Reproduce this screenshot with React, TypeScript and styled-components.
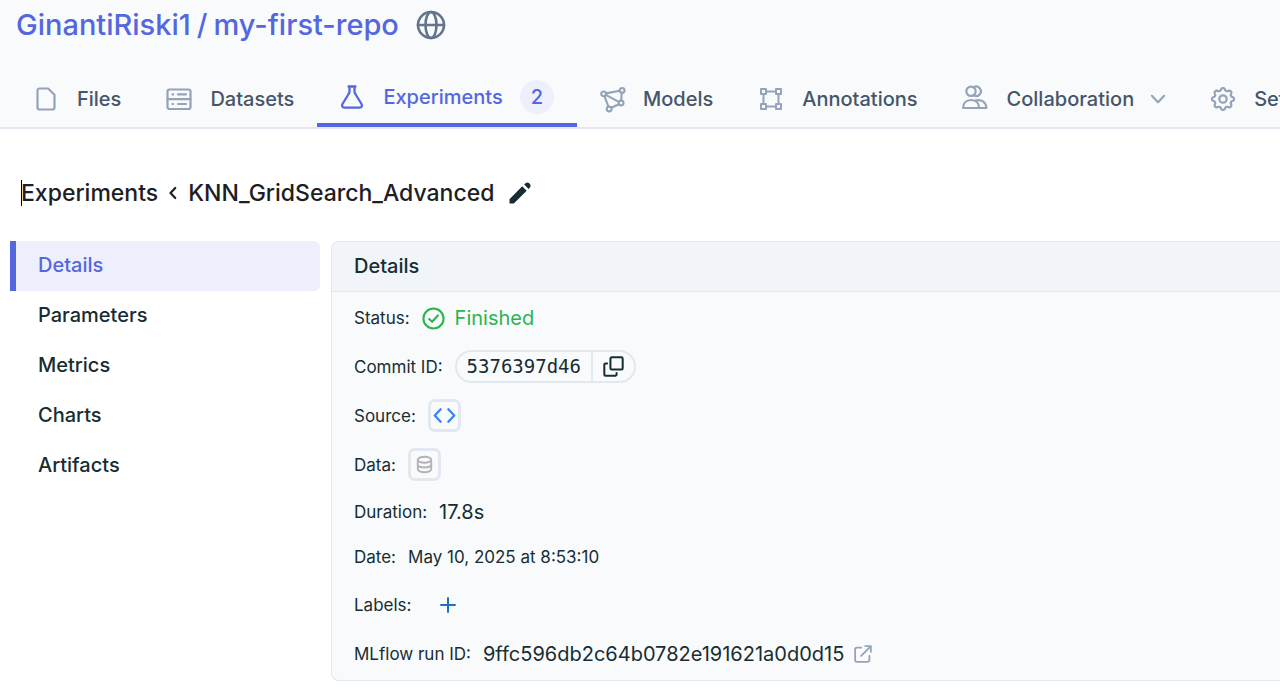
import React from "react";
import styled, { createGlobalStyle } from "styled-components";

const Global = createGlobalStyle`
  *, *::before, *::after { box-sizing: border-box; }
  body {
    margin: 0;
    background: #ffffff;
    color: #172d32;
    font-family: Inter, "Liberation Sans", sans-serif;
    overflow-x: hidden;
  }
  a { color: inherit; text-decoration: none; }
  button { font: inherit; color: inherit; background: none; border: 0; padding: 0; cursor: pointer; }
  svg { display: block; flex: none; overflow: visible; }
`;

const Header = styled.header`
  background: #f8fafc;
  border-bottom: 2px solid #e2e8f0;
`;

const RepoTitle = styled.h1`
  display: flex;
  align-items: center;
  gap: 6px;
  margin: 0;
  padding: 5px 16px 0;
  font-size: 29px;
  line-height: 40px;
  font-weight: 500;
  color: #5467de;

  svg { margin-left: 11px; color: #64748b; }
`;

const Tabs = styled.nav`
  display: flex;
  height: 56px;
  margin-top: 26px;
  padding-left: 11px;
  overflow: hidden;
`;

const Tab = styled.a<{ $active?: boolean }>`
  display: flex;
  flex: none;
  align-items: center;
  gap: 19px;
  padding: 0 23px;
  font-size: 20px;
  line-height: 24px;
  font-weight: 500;
  color: ${(p) => (p.$active ? "#5467de" : "#475569")};
  border-bottom: ${(p) => (p.$active ? "4px solid #5467de" : "0")};

  svg { color: ${(p) => (p.$active ? "#5467de" : "#94a3b8")}; }
`;

const TabText = styled.span`
  display: flex;
  align-items: center;
  gap: 17px;
`;

const Count = styled.span`
  padding: 5px 11px;
  border-radius: 17px;
  background: #edeffc;
`;

const Main = styled.main`
  padding: 44px 0 18px 10px;
`;

const Crumbs = styled.div`
  display: flex;
  align-items: center;
  gap: 9px;
  padding-left: 11px;
  font-size: 23px;
  line-height: 40px;
  font-weight: 500;
  color: #1c2024;
`;

const Current = styled.h2`
  margin: 0;
  font: inherit;
`;

const CaretLink = styled.a`
  position: relative;

  &::before {
    content: "";
    position: absolute;
    left: 0;
    top: 7px;
    width: 1px;
    height: 26px;
    background: #000000;
  }
`;

const EditButton = styled.button`
  padding-left: 5px;
`;

const Columns = styled.div`
  display: grid;
  grid-template-columns: 310px minmax(0, 1fr);
  gap: 11px;
  align-items: start;
  margin-top: 28px;
`;

const SideNav = styled.nav`
  display: flex;
  flex-direction: column;
`;

const SideLink = styled.a<{ $active?: boolean }>`
  padding: 0 22px 2px;
  font-size: 20px;
  line-height: 48px;
  font-weight: 500;
  border-left: 6px solid ${(p) => (p.$active ? "#5467de" : "transparent")};
  border-radius: 0 6px 6px 0;
  background: ${(p) => (p.$active ? "#edeffc" : "transparent")};
  color: ${(p) => (p.$active ? "#5467de" : "#172d32")};
`;

const Panel = styled.section`
  border: 1px solid #e2e8f0;
  border-right: 0;
  border-radius: 8px 0 0 8px;
  background: #f8fafc;
  overflow: hidden;
`;

const PanelTitle = styled.h3`
  margin: 0;
  padding: 0 22px;
  border-bottom: 1px solid #e2e8f0;
  background: #f1f5f9;
  font-size: 20px;
  line-height: 49px;
  font-weight: 500;
`;

const Fields = styled.dl`
  display: flex;
  flex-direction: column;
  gap: 16px;
  margin: 0;
  padding: 10px 22px 11px;
`;

const Field = styled.div`
  display: flex;
  align-items: center;
  gap: 12px;
  min-height: 29px;
`;

const Label = styled.dt`
  font-size: 17px;
  line-height: 28px;
`;

const Value = styled.dd<{ $small?: boolean }>`
  display: flex;
  align-items: center;
  gap: 10px;
  margin: 0;
  font-size: ${(p) => (p.$small ? 17 : 20)}px;
  line-height: 28px;
`;

const Status = styled.span`
  display: flex;
  align-items: center;
  gap: 10px;
  line-height: 32px;
  color: #2fb350;
`;

const Commit = styled.span`
  display: flex;
  height: 33px;
  border: 2px solid #e2e8f0;
  border-radius: 17px;
`;

const Hash = styled.a`
  padding: 0 10px;
  font-family: "DejaVu Sans Mono", monospace;
  font-size: 19px;
  line-height: 28px;
`;

const CopyButton = styled.button`
  padding: 0 10px;
  border-left: 2px solid #e2e8f0;
`;

const SquareButton = styled.button<{ $color: string }>`
  display: grid;
  place-items: center;
  width: 33px;
  height: 33px;
  border: 3px solid #e2e8f0;
  border-radius: 7px;
  color: ${(p) => p.$color};
`;

const AddButton = styled.button`
  padding: 10px 17px;
  color: #1f6fc4;
`;

const RunLink = styled.a`
  display: flex;
  align-items: center;
  gap: 10px;
  line-height: 30px;

  svg { color: #94a3b8; }
`;

type IconProps = { size?: number; width?: number; children: React.ReactNode };

const Icon = ({ size = 24, width = 2, children }: IconProps) => (
  <svg
    width={size}
    height={size}
    viewBox="0 0 24 24"
    fill="none"
    stroke="currentColor"
    strokeWidth={width}
    strokeLinecap="round"
    strokeLinejoin="round"
    aria-hidden="true"
  >
    {children}
  </svg>
);

const Globe = () => (
  <Icon size={30} width={2.1}>
    <circle cx="12" cy="12" r="10.4" />
    <ellipse cx="12" cy="12" rx="4.4" ry="10.4" />
    <path d="M1.6 12h20.8" />
  </Icon>
);

const FileIcon = () => (
  <Icon width={2.2}>
    <path d="M5.5 1.5h8.6L20.500 7.8v12.7a2 2 0 0 1-2 2H5.5a2 2 0 0 1-2-2v-17a2 2 0 0 1 2-2z" />
  </Icon>
);

const DatasetIcon = () => (
  <Icon width={2.2}>
    <rect x="0.5" y="2.500" width="23" height="19.500" rx="2" />
    <path d="M.5 12.200h23M11 7.4h8M11 17h8M5.5 7.4h.6M5.5 17h.6" />
  </Icon>
);

const FlaskIcon = () => (
  <Icon width={2.3}>
    <path d="M8.500 1.500h7M9.500 1.500v5c0 1-.5 2-1.200 3L2.500 19c-1 1.900-.2 3.600 1.800 3.600h15.400c2 0 2.800-1.700 1.800-3.600l-5.800-9.500c-.7-1-1.200-2-1.200-3V1.500" />
  </Icon>
);

const ModelIcon = () => (
  <Icon width={2.1}>
    <path d="M6.100 6.400 19.600 3.800M21.800 5.900l-.6 7.500M18.800 14.900 5.800 7.900M4.500 9.300l3.900 10.200M11.400 20.800l7.500-3.600" />
    <circle cx="3.600" cy="6.900" r="2.400" />
    <circle cx="22.100" cy="3.400" r="2.400" />
    <circle cx="21.100" cy="16" r="2.400" />
    <circle cx="9.200" cy="22" r="2.400" />
  </Icon>
);

const AnnotationIcon = () => (
  <Icon width={2}>
    <path d="M7.200 4.500h9.600M7.200 19.500h9.600M4.500 7.200v9.600M19.500 7.200v9.600" />
    <rect x="2" y="2" width="5" height="5" />
    <rect x="17" y="2" width="5" height="5" />
    <rect x="2" y="17" width="5" height="5" />
    <rect x="17" y="17" width="5" height="5" />
  </Icon>
);

const PeopleIcon = () => (
  <Icon width={2.2}>
    <circle cx="7" cy="4.300" r="4.700" />
    <path d="M9.500 .4a4.700 4.700 0 1 1 0 7.800" />
    <path d="M-.9 21c0-4.700 3-8 8-8s8 3.300 8 8z" />
    <path d="M11.600 13.500c5.500-1.700 10.700 1.700 10.700 7.500h-7.200" />
  </Icon>
);

const gearPath = (() => {
  const pts: string[] = [];
  for (let i = 0; i < 96; i++) {
    const a = (i / 96) * Math.PI * 2;
    const r = 9.8 + 1.3 * Math.tanh(1.5 * Math.cos(8 * a));
    pts.push(`${(12 + r * Math.cos(a)).toFixed(2)} ${(12 + r * Math.sin(a)).toFixed(2)}`);
  }
  return `M${pts.join("L")}z`;
})();

const GearIcon = () => (
  <Icon width={2.2}>
    <path d={gearPath} />
    <circle cx="12" cy="12" r="3.700" />
  </Icon>
);

const tabs = [
  { label: "Files", icon: <FileIcon /> },
  { label: "Datasets", icon: <DatasetIcon /> },
  { label: "Experiments", icon: <FlaskIcon />, count: 2 },
  { label: "Models", icon: <ModelIcon /> },
  { label: "Annotations", icon: <AnnotationIcon /> },
  { label: "Collaboration", icon: <PeopleIcon />, menu: true },
  { label: "Settings", icon: <GearIcon /> },
];

const sections = ["Details", "Parameters", "Metrics", "Charts", "Artifacts"];

export default function App() {
  return (
    <>
      <Global />
      <Header>
        <RepoTitle>
          <a href="#owner">GinantiRiski1</a>
          <span>/</span>
          <a href="#repo">my-first-repo</a>
          <Globe />
        </RepoTitle>
        <Tabs aria-label="Repository">
          {tabs.map((t) => (
            <Tab key={t.label} href={`#${t.label}`} $active={!!t.count}>
              {t.icon}
              <TabText>
                {t.label}
                {t.count && <Count>{t.count}</Count>}
                {t.menu && (
                  <Icon size={14} width={3.600}>
                    <path d="M1.500 6.500 12 17.500 22.500 6.500" />
                  </Icon>
                )}
              </TabText>
            </Tab>
          ))}
        </Tabs>
      </Header>
      <Main>
        <Crumbs>
          <CaretLink href="#experiments">Experiments</CaretLink>
          <Icon size={12} width={4.400}>
            <path d="M16.500 2 7 12l9.500 10" />
          </Icon>
          <Current>KNN_GridSearch_Advanced</Current>
          <EditButton aria-label="Rename experiment">
            <svg width="24" height="24" viewBox="0 0 24 24" fill="#172d32" aria-hidden="true">
              <path d="M1.500 18.200V22.500h4.300L18.700 9.800l-4.500-4.500zM22.100 6.300a2.400 2.400 0 0 0 0-3L21 2.100a2.400 2.400 0 0 0-3.200 0L16.200 3.600l4.400 4.400z" />
            </svg>
          </EditButton>
        </Crumbs>
        <Columns>
          <SideNav aria-label="Experiment">
            {sections.map((s, i) => (
              <SideLink key={s} href={`#${s}`} $active={i === 0}>
                {s}
              </SideLink>
            ))}
          </SideNav>
          <Panel>
            <PanelTitle>Details</PanelTitle>
            <Fields>
              <Field>
                <Label>Status:</Label>
                <Value>
                  <Status>
                    <Icon size={23} width={2.200}>
                      <circle cx="12" cy="12" r="10.500" />
                      <path d="m7.500 12.400 3.100 3 6-6.600" />
                    </Icon>
                    Finished
                  </Status>
                </Value>
              </Field>
              <Field>
                <Label>Commit ID:</Label>
                <Value>
                  <Commit>
                    <Hash href="#commit">5376397d46</Hash>
                    <CopyButton aria-label="Copy commit ID">
                      <Icon size={21} width={2.300}>
                        <rect x="8.500" y="1.500" width="14" height="14" rx="1.500" />
                        <path d="M4.700 8.500H3a1.500 1.500 0 0 0-1.500 1.500v11A1.500 1.500 0 0 0 3 22.500h11a1.500 1.500 0 0 0 1.500-1.500v-1.700" />
                      </Icon>
                    </CopyButton>
                  </Commit>
                </Value>
              </Field>
              <Field>
                <Label>Source:</Label>
                <Value>
                  <SquareButton $color="#3b82f6" aria-label="Open source">
                    <Icon size={23} width={2.400}>
                      <path d="M8 5.500 1.800 12 8 18.500M16 5.500 22.200 12 16 18.500" />
                    </Icon>
                  </SquareButton>
                </Value>
              </Field>
              <Field>
                <Label>Data:</Label>
                <Value>
                  <SquareButton $color="#b4b4b8" aria-label="Open data">
                    <Icon size={19} width={2.400}>
                      <ellipse cx="12" cy="6" rx="8.500" ry="3.800" />
                      <path d="M3.500 6v12c0 2 3.800 3.800 8.500 3.800s8.500-1.800 8.500-3.800V6M3.500 12.200c0 2 3.800 3.600 8.500 3.600s8.500-1.600 8.500-3.600" />
                    </Icon>
                  </SquareButton>
                </Value>
              </Field>
              <Field>
                <Label>Duration:</Label>
                <Value>17.8s</Value>
              </Field>
              <Field>
                <Label>Date:</Label>
                <Value $small>May 10, 2025 at 8:53:10</Value>
              </Field>
              <Field>
                <Label>Labels:</Label>
                <Value>
                  <AddButton aria-label="Add label">
                    <Icon size={16} width={3}>
                      <path d="M12 1.500v21M1.500 12h21" />
                    </Icon>
                  </AddButton>
                </Value>
              </Field>
              <Field>
                <Label>MLflow run ID:</Label>
                <Value>
                  <RunLink href="#run">
                    9ffc596db2c64b0782e191621a0d0d15
                    <Icon size={18} width={2.400}>
                      <path d="M9.500 3.500H4A2.500 2.500 0 0 0 1.500 6v14A2.500 2.500 0 0 0 4 22.500h14a2.500 2.500 0 0 0 2.500-2.500v-5.500M15 1.500h7.500V9M22.500 1.500 9.500 14.500" />
                    </Icon>
                  </RunLink>
                </Value>
              </Field>
            </Fields>
          </Panel>
        </Columns>
      </Main>
    </>
  );
}
